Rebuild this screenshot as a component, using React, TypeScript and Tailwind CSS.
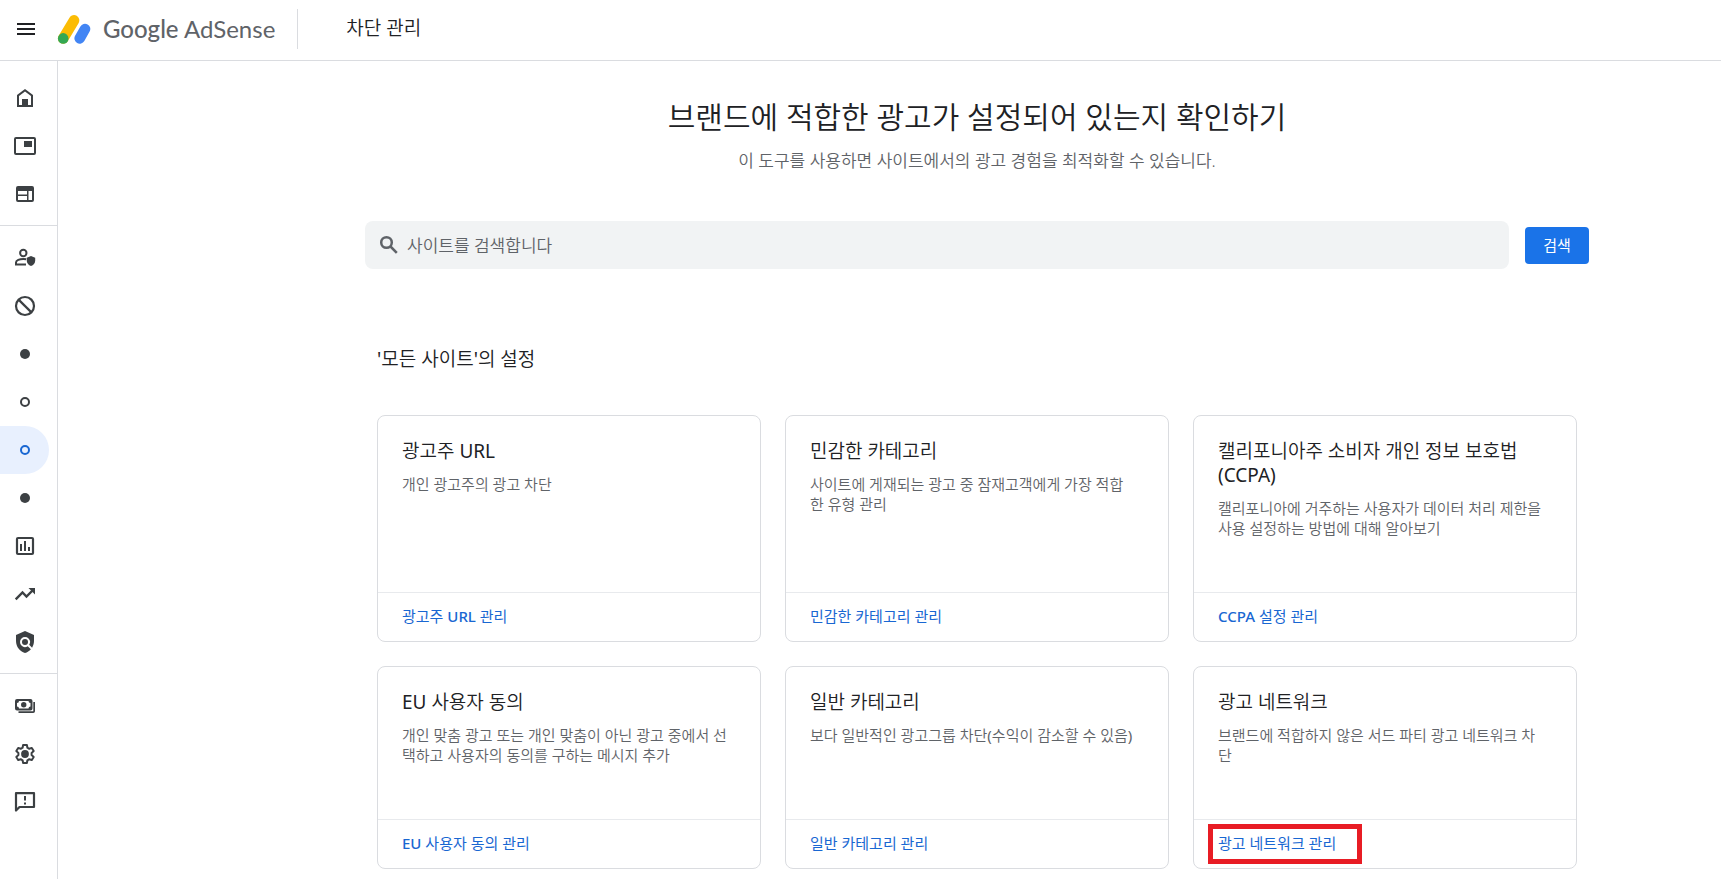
import type { ReactNode } from 'react';
import { MdMenu, MdPolicy } from 'react-icons/md';

function LogoMark() {
  return (
    <svg width="34" height="32" viewBox="0 0 34 32" fill="none" strokeLinecap="round" aria-hidden="true">
      <path d="M17 7.4 6.2 25.4" stroke="#fbbc04" strokeWidth="10.6" />
      <path d="M28 16 22.7 25.4" stroke="#4285f4" strokeWidth="10.6" />
      <circle cx="6.2" cy="25.4" r="5.3" fill="#34a853" />
    </svg>
  );
}

function Glyph({ children }: { children: ReactNode }) {
  return (
    <svg width="24" height="24" viewBox="0 0 24 24" fill="currentColor" aria-hidden="true">
      {children}
    </svg>
  );
}

const HomeIcon = () => (
  <Glyph>
    <path fillRule="evenodd" d="M4 21V9l8-6 8 6v12H4Zm2-2h3v-6h6v6h3v-9l-6-4.5L6 10v9Z" />
  </Glyph>
);

const PipIcon = () => (
  <Glyph>
    <path
      fillRule="evenodd"
      d="M3 3h18a2 2 0 0 1 2 2v14a2 2 0 0 1-2 2H3a2 2 0 0 1-2-2V5a2 2 0 0 1 2-2Zm0 2v14h18V5H3Zm8 2h8v6h-8V7Z"
    />
  </Glyph>
);

const WebIcon = () => (
  <Glyph>
    <path
      fillRule="evenodd"
      d="M5 4h14a2 2 0 0 1 2 2v12a2 2 0 0 1-2 2H5a2 2 0 0 1-2-2V6a2 2 0 0 1 2-2Zm0 5v3.500h9V9H5Zm0 5V18h9v-4H5Zm10.500-5v9H19V9h-3.500Z"
    />
  </Glyph>
);

const PersonShieldIcon = () => (
  <Glyph>
    <circle cx="10.3" cy="7" r="3.2" fill="none" stroke="currentColor" strokeWidth="2" />
    <path d="M13 18.5H3v-2c0-2.2 3.6-3.6 7.3-3.6 1 0 2 .1 2.9.3" fill="none" stroke="currentColor" strokeWidth="2" />
    <path d="M18 10l4.2 1.7v3c0 2.5-1.8 4.7-4.2 5.3-2.4-.6-4.2-2.8-4.2-5.3v-3L18 10Z" />
  </Glyph>
);

const BlockIcon = () => (
  <Glyph>
    <circle cx="12" cy="12" r="9" fill="none" stroke="currentColor" strokeWidth="2.2" />
    <path d="M5.600 5.600 18.400 18.400" stroke="currentColor" strokeWidth="2.2" />
  </Glyph>
);

const DotIcon = () => (
  <Glyph>
    <circle cx="12" cy="12" r="5" />
  </Glyph>
);

const RingIcon = () => (
  <Glyph>
    <circle cx="12" cy="12" r="4" fill="none" stroke="currentColor" strokeWidth="2" />
  </Glyph>
);

const ReportIcon = () => (
  <Glyph>
    <rect x="4" y="4" width="16" height="16" rx="1" fill="none" stroke="currentColor" strokeWidth="2.2" />
    <path d="M7 10h2v7H7zM11 7h2v10h-2zM15 13h2v4h-2z" />
  </Glyph>
);

const TrendIcon = () => (
  <Glyph>
    <path d="m2.700 17.300 6.800-6.800 4 4 7-7" fill="none" stroke="currentColor" strokeWidth="2.400" />
    <path d="M15.500 6H22v6.500L15.500 6Z" />
  </Glyph>
);

const PaymentsIcon = () => (
  <Glyph>
    <path
      fillRule="evenodd"
      d="M4 5h13.5a2 2 0 0 1 2 2v7.5a2 2 0 0 1-2 2H4a2 2 0 0 1-2-2V7a2 2 0 0 1 2-2Zm2 2a2 2 0 0 1-2 2v3.5a2 2 0 0 1 2 2h9.5a2 2 0 0 1 2-2V9a2 2 0 0 1-2-2H6Z"
    />
    <circle cx="10.75" cy="10.75" r="2.7" />
    <path d="M20.3 8H22v9.2a1.8 1.8 0 0 1-1.8 1.8H5.5v-1.8h14.8V8Z" />
  </Glyph>
);

const SettingsIcon = () => (
  <Glyph>
    <path
      d="M10.1 3h3.8l.5 2.7 1.9 1.1 2.5-.9 1.9 3.2-2.1 1.8v2.2l2.1 1.8-1.9 3.2-2.5-.9-1.9 1.1-.5 2.7h-3.8l-.5-2.7-1.9-1.1-2.5.9-1.9-3.2 2.1-1.8v-2.2L3.3 9.1l1.9-3.2 2.5.9 1.9-1.1.5-2.7Z"
      fill="none"
      stroke="currentColor"
      strokeWidth="2"
      strokeLinejoin="round"
    />
    <circle cx="12" cy="12" r="3.9" />
  </Glyph>
);

const FeedbackIcon = () => (
  <Glyph>
    <path d="M3 20.500V3.200h18V17H6.500L3 20.500Z" fill="none" stroke="currentColor" strokeWidth="2.200" strokeLinejoin="round" />
    <path d="M11 6h2v4.500h-2zM11 12.500h2v2h-2z" />
  </Glyph>
);

const SearchIcon = () => (
  <Glyph>
    <g fill="none" stroke="currentColor" strokeWidth="2.500">
      <circle cx="9.500" cy="9.500" r="5.300" />
      <path d="m13.500 13.500 6.300 6.300" />
    </g>
  </Glyph>
);

type NavItem = { label: string; icon: ReactNode; active?: boolean };

const navGroups: NavItem[][] = [
  [
    { label: '홈', icon: <HomeIcon /> },
    { label: '광고', icon: <PipIcon /> },
    { label: '사이트', icon: <WebIcon /> },
  ],
  [
    { label: '개인 정보 보호 및 메시지', icon: <PersonShieldIcon /> },
    { label: '브랜드 안전', icon: <BlockIcon /> },
    { label: '콘텐츠', icon: <DotIcon /> },
    { label: '광고 심사 센터', icon: <RingIcon /> },
    { label: '차단 관리', icon: <RingIcon />, active: true },
    { label: '동영상', icon: <DotIcon /> },
    { label: '보고서', icon: <ReportIcon /> },
    { label: '최적화', icon: <TrendIcon /> },
    { label: '정책 센터', icon: <MdPolicy size={24} /> },
  ],
  [
    { label: '지급', icon: <PaymentsIcon /> },
    { label: '계정', icon: <SettingsIcon /> },
    { label: '의견', icon: <FeedbackIcon /> },
  ],
];

type Card = { title: string; description: string; link: string; highlighted?: boolean };

const cards: Card[] = [
  { title: '광고주 URL', description: '개인 광고주의 광고 차단', link: '광고주 URL 관리' },
  {
    title: '민감한 카테고리',
    description: '사이트에 게재되는 광고 중 잠재고객에게 가장 적합\n한 유형 관리',
    link: '민감한 카테고리 관리',
  },
  {
    title: '캘리포니아주 소비자 개인 정보 보호법\n(CCPA)',
    description: '캘리포니아에 거주하는 사용자가 데이터 처리 제한을\n사용 설정하는 방법에 대해 알아보기',
    link: 'CCPA 설정 관리',
  },
  {
    title: 'EU 사용자 동의',
    description: '개인 맞춤 광고 또는 개인 맞춤이 아닌 광고 중에서 선\n택하고 사용자의 동의를 구하는 메시지 추가',
    link: 'EU 사용자 동의 관리',
  },
  {
    title: '일반 카테고리',
    description: '보다 일반적인 광고그룹 차단(수익이 감소할 수 있음)',
    link: '일반 카테고리 관리',
  },
  {
    title: '광고 네트워크',
    description: '브랜드에 적합하지 않은 서드 파티 광고 네트워크 차\n단',
    link: '광고 네트워크 관리',
    highlighted: true,
  },
];

/* Latin runs are set one weight heavier than the Hangul around them. */
function MixedText({ text, latinClass }: { text: string; latinClass: string }) {
  return text.split(/([A-Z()]+)/).map((part, i) =>
    i % 2 === 1 ? (
      <span key={i} className={latinClass}>
        {part}
      </span>
    ) : (
      part
    ),
  );
}

function Header() {
  return (
    <header className="flex h-[61px] items-center border-b border-[#dadce0] pb-0.5 pl-3.5">
      <button type="button" aria-label="메뉴" className="text-[#202124]">
        <MdMenu size={24} />
      </button>
      <a href="#" className="ml-[19px] flex items-center gap-3 text-[#5f6368]">
        <LogoMark />
        <span className="font-['Lato','Noto_Sans',sans-serif] text-2xl leading-8 font-normal">
          <span className="font-medium">Google</span> AdSense
        </span>
      </a>
      <div className="ml-[22px] h-10 w-px bg-[#dadce0]" />
      <p className="ml-12 pb-0.5 text-[19px] leading-6">차단 관리</p>
    </header>
  );
}

function Sidebar() {
  return (
    <nav aria-label="기본 메뉴" className="w-[58px] shrink-0 border-r border-[#dadce0] pt-[5px] text-[#3c4043]">
      {navGroups.map((group, i) => (
        <ul key={i} className="border-b border-[#dadce0] pt-2 pb-[7px] last:border-b-0">
          {group.map((item) => (
            <li key={item.label}>
              <a
                href="#"
                aria-label={item.label}
                aria-current={item.active ? 'page' : undefined}
                className={
                  item.active
                    ? 'mr-2 flex h-12 items-center rounded-r-full bg-[#e8f0fe] pl-[13px] text-[#1967d2]'
                    : 'mr-2 flex h-12 items-center rounded-r-full pl-[13px]'
                }
              >
                {item.icon}
              </a>
            </li>
          ))}
        </ul>
      ))}
    </nav>
  );
}

function SettingCard({ card }: { card: Card }) {
  return (
    <li className="flex flex-col rounded-lg border border-[#dadce0]">
      <div className="grow px-6 pt-[23px] pb-[54px]">
        <h3 className="text-[19px] leading-6 whitespace-pre-line">
          <MixedText text={card.title} latinClass="font-normal" />
        </h3>
        <p className="mt-[11px] min-h-10 text-[15px] leading-5 whitespace-pre-line text-[#5f6368]">
          <MixedText text={card.description} latinClass="font-normal" />
        </p>
      </div>
      <div className="relative flex h-[49px] items-center border-t border-[#e8eaed] px-6 pb-0.5">
        <a href="#" className="text-[15px] leading-5 font-normal text-[#1967d2]">
          <MixedText text={card.link} latinClass="font-medium" />
        </a>
        {card.highlighted && (
          <div className="pointer-events-none absolute top-1 left-3.5 h-10 w-[154px] border-5 border-[#e81c24]" />
        )}
      </div>
    </li>
  );
}

export default function App() {
  return (
    <div
      className="flex min-h-screen flex-col bg-white font-['Noto_Sans','Noto_Sans_CJK_KR',sans-serif] font-[350] text-[#202124]"
      lang="ko"
    >
      <Header />
      <div className="flex grow">
        <Sidebar />
        <main className="grow pt-9 pb-2.5 pl-[175px]">
          <div className="mx-auto max-w-[1224px]">
            <h1 className="text-center text-[30px] leading-10">브랜드에 적합한 광고가 설정되어 있는지 확인하기</h1>
            <p className="mt-3 text-center text-[17px] leading-6 text-[#5f6368]">
              이 도구를 사용하면 사이트에서의 광고 경험을 최적화할 수 있습니다.
            </p>
            <form className="mt-12 flex items-center gap-4" onSubmit={(e) => e.preventDefault()}>
              <label className="flex h-12 grow items-center gap-1.5 rounded-lg bg-[#f1f3f4] px-3 text-[#5f6368]">
                <SearchIcon />
                <input
                  type="text"
                  aria-label="사이트 검색"
                  placeholder="사이트를 검색합니다"
                  className="h-full grow bg-transparent text-[17px] outline-none placeholder:text-[#5f6368]"
                />
              </label>
              <button type="submit" className="h-[37px] w-16 rounded bg-[#1a73e8] text-[15px] leading-5 font-normal text-white">
                검색
              </button>
            </form>
            <section className="mt-[78px] px-3">
              <h2 className="text-[19px] leading-6">
                <span className="font-normal">'</span>모든 사이트<span className="font-normal">'</span>의 설정
              </h2>
              <ul className="mt-11 grid grid-cols-3 gap-6">
                {cards.map((card) => (
                  <SettingCard key={card.title} card={card} />
                ))}
              </ul>
            </section>
          </div>
        </main>
      </div>
    </div>
  );
}
